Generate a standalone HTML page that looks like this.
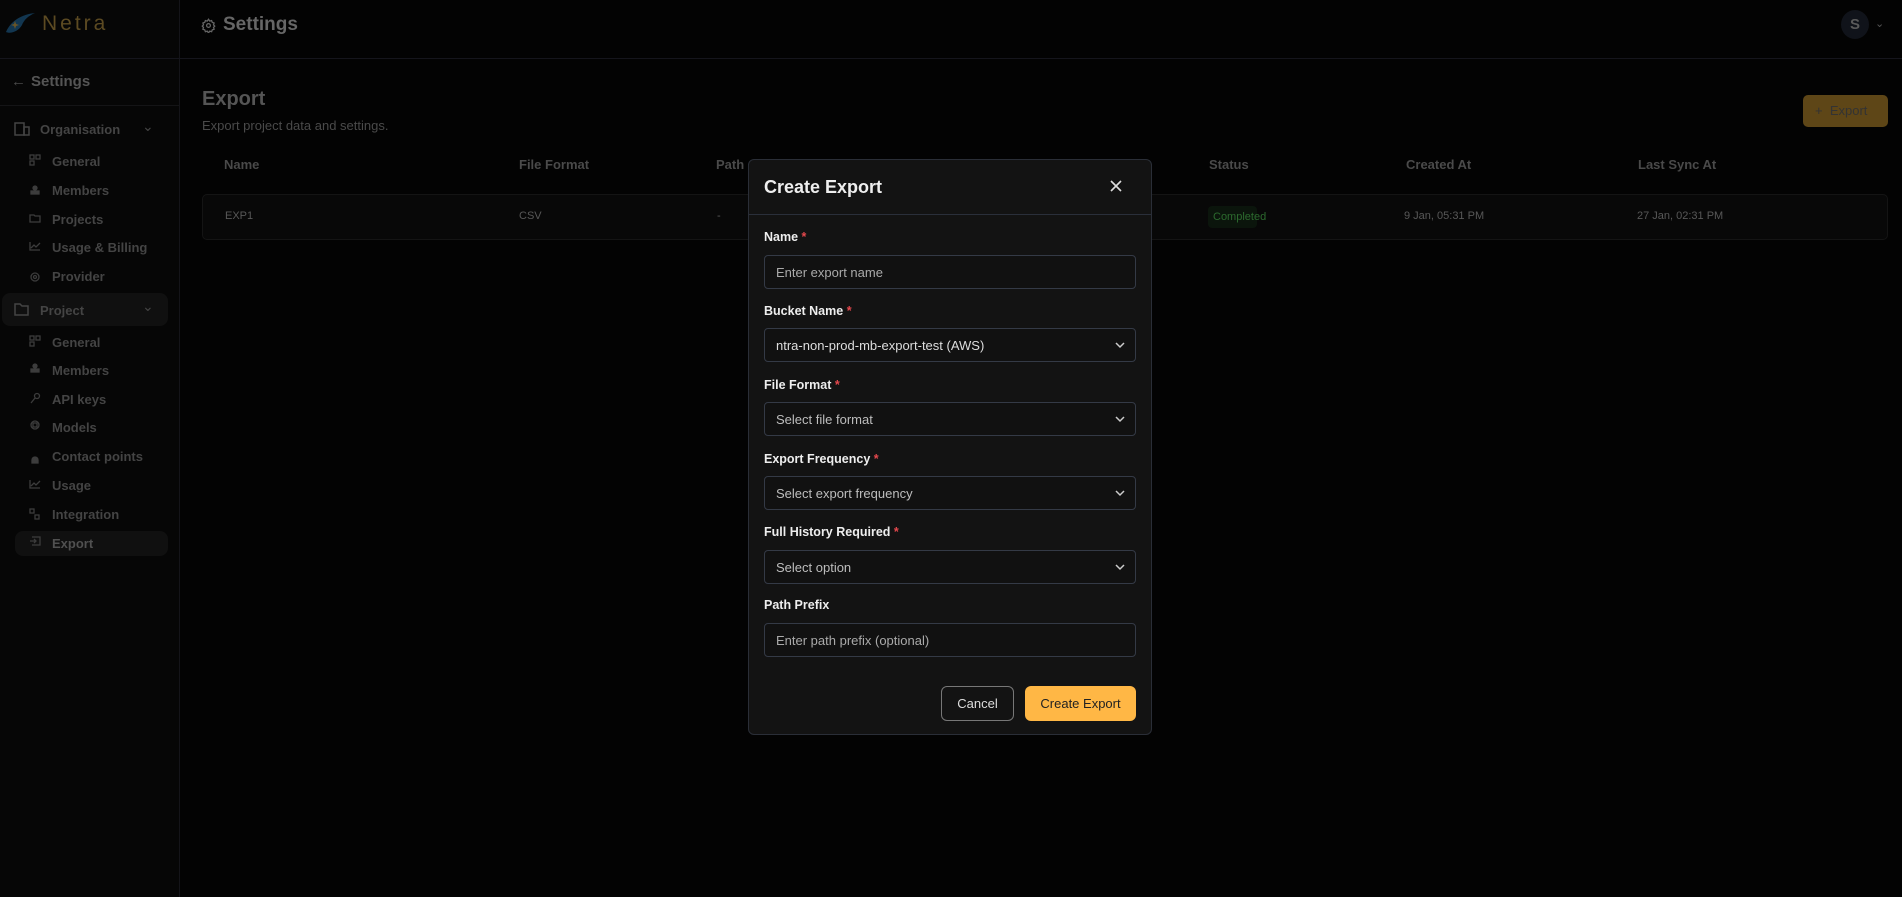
<!DOCTYPE html>
<html><head><meta charset="utf-8"><style>
*{box-sizing:border-box;margin:0;padding:0}
body{width:1902px;height:897px;background:#030303;font-family:"Liberation Sans",sans-serif;position:relative;overflow:hidden;color:#555}
.abs{position:absolute}
.sb{left:0;top:0;width:180px;height:897px;border-right:1px solid #141419;background:#060606}
.hl{background:#101010;border-radius:8px}
.it{position:absolute;left:52px;font-size:13px;font-weight:bold;color:#444}
.hd{font-size:13px;font-weight:bold;color:#4a4a4a;position:absolute;top:157px}
.cell{font-size:11px;color:#585858;position:absolute;top:210px}
.modal{left:748px;top:159px;width:404px;height:576px;background:#131313;border:1px solid #2a2e37;border-radius:6px}
.lbl{position:absolute;left:15px;font-size:12.5px;font-weight:bold;color:#eee}
.lbl b{color:#e5484d;font-weight:bold}
.inp{position:absolute;left:15px;width:372px;height:34px;border:1px solid #343a46;border-radius:4px;background:#111;font-size:13px;color:#bdbdbd;padding:9px 11px}
.chev{position:absolute;right:9px;top:11px}
</style></head><body>
<div class="abs sb"></div>
<div class="abs" style="left:0;top:58px;width:1902px;height:1px;background:#15151c"></div>
<div class="abs" style="left:0;top:105px;width:180px;height:1px;background:#141416"></div>
<svg class="abs" style="left:4px;top:12px" width="32" height="24" viewBox="0 0 32 24"><path d="M2 20 C8 6 22 2 31 1 C24 4 20 8 18 13 C14 20 6 22 2 20Z" fill="#123650"/><path d="M10 12 l1 -3 1 3 3 1 -3 1 -1 3 -1 -3 -3 -1z" fill="#6b5526"/></svg>
<div class="abs" style="left:42px;top:12px;font-size:21px;letter-spacing:3px;color:#5c4a22">Netra</div>
<svg class="abs" style="left:201px;top:18px" width="15" height="15" viewBox="0 0 24 24" fill="none" stroke="#666" stroke-width="2"><circle cx="12" cy="12" r="3"/><path d="M12 2l2 3 3-1 1 3 3 1-1 3 2 2-2 2 1 3-3 1-1 3-3-1-2 3-2-3-3 1-1-3-3-1 1-3-2-2 2-2-1-3 3-1 1-3 3 1z"/></svg>
<div class="abs" style="left:223px;top:14px;font-size:19px;font-weight:bold;color:#666">Settings</div>
<div class="abs" style="left:1841px;top:10px;width:28px;height:29px;border-radius:50%;background:#10131a;color:#5a5a5a;font-weight:bold;font-size:15px;text-align:center;line-height:29px">S</div>
<div class="abs" style="left:1875px;top:17px;color:#555;font-size:11px">&#8964;</div>

<div class="abs" style="left:11px;top:73px;color:#4a4a4a;font-size:15px">&#8592;</div>
<div class="abs" style="left:31px;top:73px;font-size:15px;font-weight:bold;color:#555">Settings</div>
<svg class="abs" style="left:14px;top:122px" width="16" height="14"><rect x="1" y="1" width="9" height="12" fill="none" stroke="#444" stroke-width="1.5"/><rect x="10" y="5" width="5" height="8" fill="none" stroke="#444" stroke-width="1.5"/></svg>
<div class="it" style="left:40px;top:122px">Organisation</div>
<div class="abs" style="left:142px;top:118px;color:#444;font-size:14px">&#8964;</div>
<div class="it" style="top:154px">General</div>
<div class="it" style="top:183px">Members</div>
<div class="it" style="top:212px">Projects</div>
<div class="it" style="top:240px">Usage &amp; Billing</div>
<div class="it" style="top:269px">Provider</div>
<div class="abs hl" style="left:2px;top:293px;width:166px;height:33px"></div>
<svg class="abs" style="left:14px;top:302px" width="16" height="14"><path d="M1 2h5l2 2h6v9H1z" fill="none" stroke="#444" stroke-width="1.5"/></svg>
<div class="it" style="left:40px;top:303px">Project</div>
<div class="abs" style="left:142px;top:298px;color:#444;font-size:14px">&#8964;</div>
<div class="it" style="top:335px">General</div>
<div class="it" style="top:363px">Members</div>
<div class="it" style="top:392px">API keys</div>
<div class="it" style="top:420px">Models</div>
<div class="it" style="top:449px">Contact points</div>
<div class="it" style="top:478px">Usage</div>
<div class="it" style="top:507px">Integration</div>
<div class="abs hl" style="left:15px;top:531px;width:153px;height:25px"></div>
<div class="it" style="top:536px;color:#505050">Export</div>
<svg class="abs" style="left:29px;top:0" width="14" height="560" fill="none" stroke="#3c3c3c" stroke-width="1.3">
<rect x="1" y="155" width="4" height="4"/><rect x="7" y="155" width="4" height="4"/><rect x="1" y="161" width="4" height="4"/>
<circle cx="6" cy="188" r="2" fill="#3c3c3c"/><rect x="2" y="191" width="8" height="3" fill="#3c3c3c"/>
<path d="M1 215h4l1 1h5v6H1z"/><path d="M1 242v8h10M2 248l3-3 2 2 4-4"/>
<circle cx="6" cy="277" r="4"/><circle cx="6" cy="277" r="1.5"/>
<rect x="1" y="336" width="4" height="4"/><rect x="7" y="336" width="4" height="4"/><rect x="1" y="342" width="4" height="4"/>
<circle cx="6" cy="366" r="2" fill="#3c3c3c"/><rect x="2" y="369" width="8" height="3" fill="#3c3c3c"/>
<circle cx="8" cy="396" r="2.5"/><path d="M6 398l-4 5"/>
<circle cx="6" cy="425" r="4"/><rect x="4" y="423" width="4" height="4"/>
<path d="M3 460a3 3 0 0 1 6 0v3H3z" fill="#3c3c3c"/>
<path d="M1 480v8h10M2 486l3-3 2 2 4-4"/>
<rect x="1" y="509" width="4" height="4"/><rect x="6" y="515" width="4" height="4"/>
<path d="M3 537h8v8H3M1 541h6M5 539l2 2-2 2"/>
</svg>

<div class="abs" style="left:202px;top:88px;font-size:20px;font-weight:bold;color:#555">Export</div>
<div class="abs" style="left:202px;top:118px;font-size:13px;color:#4a4a4a">Export project data and settings.</div>
<div class="abs" style="left:1803px;top:95px;width:85px;height:32px;background:#5e4617;border-radius:5px;color:#333;font-size:13px;padding:8px 0 0 12px">+&nbsp; Export</div>
<div class="hd" style="left:224px">Name</div>
<div class="hd" style="left:519px">File Format</div>
<div class="hd" style="left:716px">Path</div>
<div class="hd" style="left:1209px">Status</div>
<div class="hd" style="left:1406px">Created At</div>
<div class="hd" style="left:1638px">Last Sync At</div>
<div class="abs" style="left:202px;top:194px;width:1686px;height:46px;border:1px solid #141414;border-radius:5px;background:#080808"></div>
<div class="cell" style="left:225px">EXP1</div>
<div class="cell" style="left:519px">CSV</div>
<div class="cell" style="left:717px">-</div>
<div class="abs" style="left:1208px;top:206px;width:49px;height:22px;background:#0b150c;border-radius:4px;color:#2c6a2e;font-size:11px;padding:5px 0 0 5px">Completed</div>
<div class="cell" style="left:1404px">9 Jan, 05:31 PM</div>
<div class="cell" style="left:1637px">27 Jan, 02:31 PM</div>

<div class="abs modal">
<div class="abs" style="left:15px;top:17px;font-size:18px;font-weight:bold;color:#eee">Create Export</div>
<svg class="abs" style="left:361px;top:20px" width="12" height="12" stroke="#ddd" stroke-width="1.6"><path d="M1 1l10 10M11 1L1 11"/></svg>
<div class="abs" style="left:0;top:54px;width:402px;height:1px;background:#2a2f3a"></div>
<div class="lbl" style="top:70px">Name <b>*</b></div>
<div class="inp" style="top:95px;color:#aaa">Enter export name</div>
<div class="lbl" style="top:144px">Bucket Name <b>*</b></div>
<div class="inp" style="top:168px;color:#ddd">ntra-non-prod-mb-export-test (AWS)<svg class="chev" width="12" height="10" fill="none" stroke="#ccc" stroke-width="1.5"><path d="M2 3l4 4 4-4"/></svg></div>
<div class="lbl" style="top:218px">File Format <b>*</b></div>
<div class="inp" style="top:242px">Select file format<svg class="chev" width="12" height="10" fill="none" stroke="#ccc" stroke-width="1.5"><path d="M2 3l4 4 4-4"/></svg></div>
<div class="lbl" style="top:292px">Export Frequency <b>*</b></div>
<div class="inp" style="top:316px">Select export frequency<svg class="chev" width="12" height="10" fill="none" stroke="#ccc" stroke-width="1.5"><path d="M2 3l4 4 4-4"/></svg></div>
<div class="lbl" style="top:365px">Full History Required <b>*</b></div>
<div class="inp" style="top:390px">Select option<svg class="chev" width="12" height="10" fill="none" stroke="#ccc" stroke-width="1.5"><path d="M2 3l4 4 4-4"/></svg></div>
<div class="lbl" style="top:438px">Path Prefix</div>
<div class="inp" style="top:463px;color:#aaa">Enter path prefix (optional)</div>
<div class="abs" style="left:192px;top:526px;width:73px;height:35px;border:1px solid #777;border-radius:6px;color:#ddd;font-size:13px;text-align:center;line-height:33px">Cancel</div>
<div class="abs" style="left:276px;top:526px;width:111px;height:35px;background:#ffb745;border-radius:6px;color:#222;font-size:13px;text-align:center;line-height:35px">Create Export</div>
</div>
</body></html>
